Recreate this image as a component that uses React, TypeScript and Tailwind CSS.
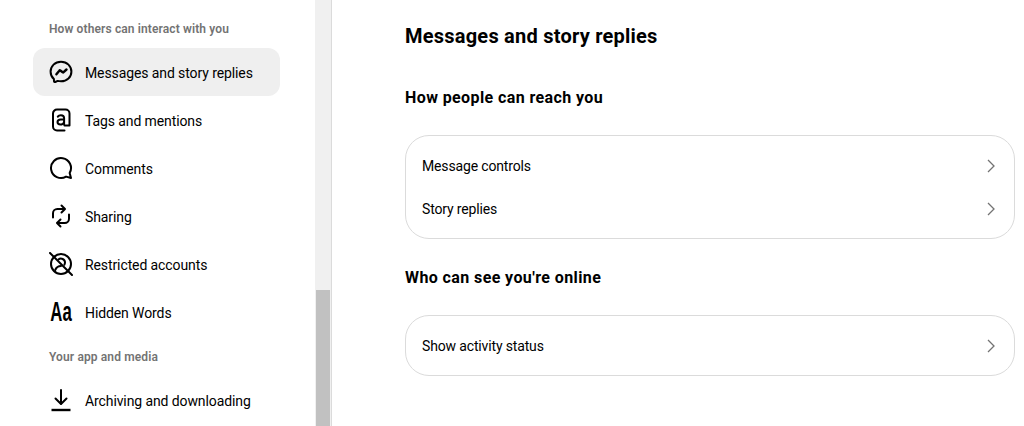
import React from "react";

const S = (p: { children: React.ReactNode }) => (
  <svg width="24" height="24" viewBox="0 0 24 24" fill="none" stroke="#000" strokeWidth="2" strokeLinecap="round" strokeLinejoin="round">
    {p.children}
  </svg>
);

const Messenger = () => (
  <S>
    <path d="M12 1.8C6 1.8 1.6 6.1 1.6 11.7c0 3 1.2 5.5 3.3 7.3l.1 2.3c0 .6.7 1 1.2.7l2.5-1.1c1 .3 2.1.4 3.3.4 6 0 10.4-4.3 10.4-9.6C22.4 6.1 18 1.8 12 1.8Z" />
    <path d="M7.4 14.3l2.9-3.6c.3-.4.7-.4 1-.2l2.4 1.8c.3.2.6.2.9-.1l2.9-2.7" strokeWidth="2.4" />
  </S>
);
const At = () => (
  <S>
    <path d="M15.5 22.5H8a4 4 0 0 1-4-4V5.5a4 4 0 0 1 4-4h8.5a4 4 0 0 1 4 4v12h-5" />
    <path d="M8.8 8.6c.6-.9 1.7-1.4 3.1-1.4 2 0 3.2 1 3.2 2.8v6.4" />
    <path d="M15 11.6h-3.2c-2 0-3.3.9-3.3 2.5 0 1.5 1.2 2.4 2.9 2.4 1.6 0 3-.8 3.6-2.2" />
  </S>
);
const Comment = () => (
  <S>
    <path d="M20.656 17.008a9.993 9.993 0 1 0-3.59 3.615L22 22Z" />
  </S>
);
const Share = () => (
  <svg width="24" height="24" viewBox="0 0 24 24" fill="#000">
    <path d="M19.998 9.497a1 1 0 0 0-1 1v4.228a3.274 3.274 0 0 1-3.27 3.27h-5.313l1.791-1.787a1 1 0 0 0-1.412-1.416L7.29 18.287a1.004 1.004 0 0 0-.294.707v.001c0 .023.012.042.013.065a.923.923 0 0 0 .281.643l3.502 3.504a1 1 0 0 0 1.414-1.414l-1.797-1.798h5.318a5.276 5.276 0 0 0 5.27-5.27v-4.228a1 1 0 0 0-1-1Zm-6.41-3.496-1.795 1.795a1 1 0 1 0 1.414 1.414l3.5-3.5a1.003 1.003 0 0 0 0-1.417l-3.5-3.5a1 1 0 0 0-1.414 1.414l1.794 1.794H8.27A5.277 5.277 0 0 0 3 9.271V13.5a1 1 0 0 0 2 0V9.271a3.275 3.275 0 0 1 3.271-3.27Z" />
  </svg>
);
const Restrict = () => (
  <S>
    <circle cx="12" cy="12" r="10" />
    <path d="M1 1 23 23" />
    <path d="M6.2 18c1-2.4 3.2-4 5.8-4" />
    <path d="M9.4 7.6A4 4 0 0 1 16 10.6c0 .7-.2 1.4-.6 2" />
  </S>
);
const Download = () => (
  <S>
    <path d="M12 2v13.5" />
    <path d="M6.5 10.5 12 16l5.5-5.5" />
    <path d="M2.5 22h19" strokeLinecap="butt" strokeWidth="2.4" />
  </S>
);
const Aa = () => (
  <span className="flex w-6 h-6 items-center justify-center font-['Liberation_Sans'] font-bold text-[27px] leading-none text-black scale-x-[0.62] whitespace-nowrap">
    Aa
  </span>
);
const Chevron = () => (
  <svg width="16" height="16" viewBox="0 0 16 16" fill="none" stroke="#737373" strokeWidth="1.3">
    <path d="M5 2l6 6-6 6" />
  </svg>
);

const NavItem = ({ icon, label, active }: { icon: React.ReactNode; label: string; active?: boolean }) => (
  <div className={`flex h-12 items-center gap-3 rounded-xl px-4 ${active ? "bg-[#efefef]" : ""}`}>
    {icon}
    <span className="mt-[2px] text-[14px] tracking-[-0.1px] text-black">{label}</span>
  </div>
);

const Row = ({ label }: { label: string }) => (
  <div className="flex h-[43px] items-center justify-between pl-4 pr-[15px]">
    <span className="mt-[1px] text-[14px] tracking-[-0.15px] text-black">{label}</span>
    <Chevron />
  </div>
);

export default function App() {
  return (
    <div className="flex h-[426px] w-[1024px] overflow-hidden bg-white font-['Roboto',sans-serif]">
      <aside className="w-[315px] shrink-0 pl-[33px] pr-[35px]">
        <div className="flex h-12 items-end pb-[10px] pl-4 text-[12px] font-semibold tracking-[0.12px] text-[#737373]">How others can interact with you</div>
        <NavItem icon={<Messenger />} label="Messages and story replies" active />
        <NavItem icon={<At />} label="Tags and mentions" />
        <NavItem icon={<Comment />} label="Comments" />
        <NavItem icon={<Share />} label="Sharing" />
        <NavItem icon={<Restrict />} label="Restricted accounts" />
        <NavItem icon={<Aa />} label="Hidden Words" />
        <div className="flex h-10 items-start pt-3 pl-4 text-[12px] font-semibold tracking-[0.12px] text-[#737373]">Your app and media</div>
        <NavItem icon={<Download />} label="Archiving and downloading" />
      </aside>
      <div className="flex w-[17px] shrink-0 flex-col justify-end border-r border-[#dbdbdb] bg-[#f0f0f0] pl-[1px] pr-[1px]">
        <div className="h-[136px] bg-[#c1c1c1]" />
      </div>
      <main className="flex-1 pl-[73px] pr-[9px]">
        <h1 className="mt-[22px] text-[20px] leading-[28px] font-bold tracking-[0.23px] text-black">Messages and story replies</h1>
        <h2 className="mt-[36px] text-[16px] leading-[24px] font-bold tracking-[0.4px] text-black">How people can reach you</h2>
        <div className="mt-[25px] rounded-[24px] border border-[#dbdbdb] py-2">
          <Row label="Message controls" />
          <Row label="Story replies" />
        </div>
        <h2 className="mt-[27px] mb-[25px] text-[16px] leading-[24px] font-bold tracking-[0.4px] text-black">Who can see you're online</h2>
        <div className="rounded-[24px] border border-[#dbdbdb] py-2">
          <Row label="Show activity status" />
        </div>
      </main>
    </div>
  );
}
